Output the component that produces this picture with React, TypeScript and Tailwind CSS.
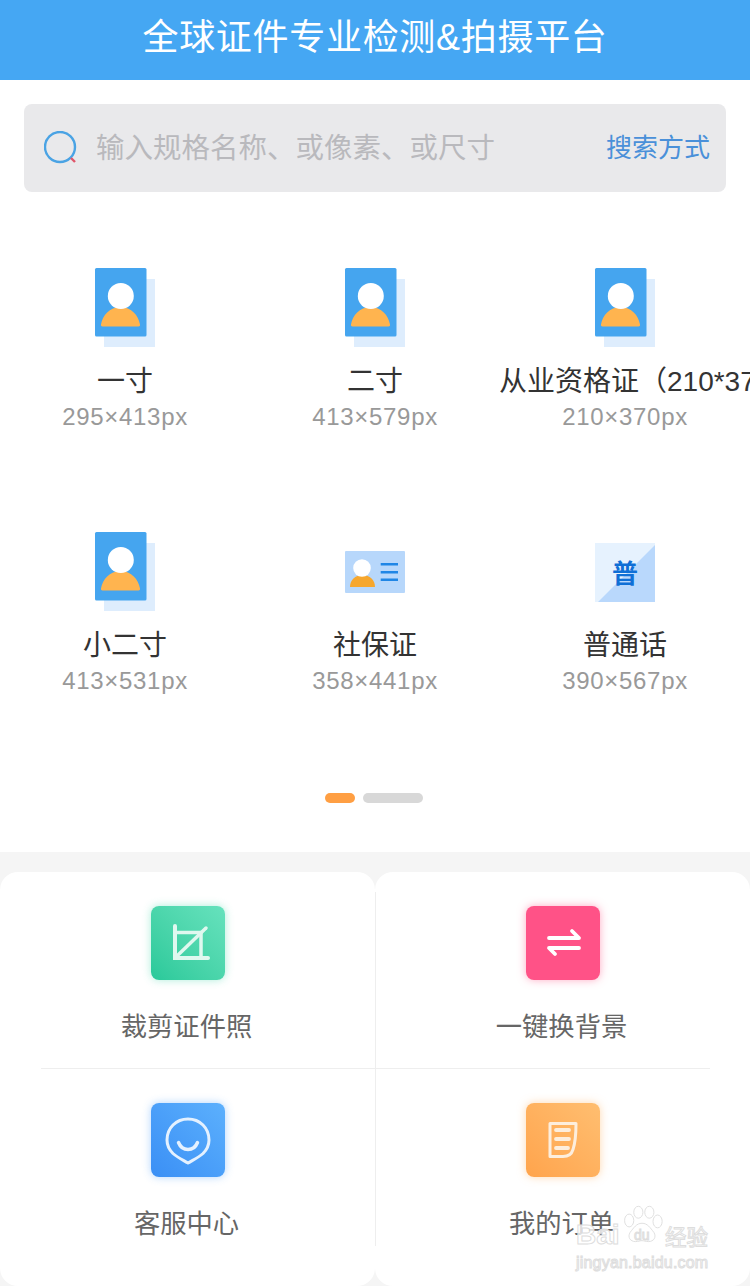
const FONT = "font-['Liberation_Sans','Noto_Sans_CJK_SC',sans-serif]";

function PersonIcon() {
  return (
    <svg width="80" height="80" viewBox="0 0 80 80">
      <rect x="19" y="11" width="51" height="68" fill="#deedfd" />
      <rect x="10" y="0" width="51.500" height="68.500" rx="1.500" fill="#45a5ef" />
      <path d="M17.500 58.500h36c1 0 1.800-.8 1.500-2-1.500-9-8.500-17.500-19.500-17.500S17.500 47.500 16 56.500c-.3 1.200.5 2 1.500 2z" fill="#ffb44f" />
      <circle cx="35.800" cy="28" r="13" fill="#fff" />
    </svg>
  );
}

function CardIcon() {
  return (
    <svg width="80" height="80" viewBox="0 0 80 80">
      <rect x="10" y="19" width="60" height="42" rx="1" fill="#b7d7fb" />
      <path d="M15 55c0-7 5-12 12.500-12S40 48 40 55z" fill="#f6a72e" />
      <circle cx="27" cy="36" r="8.800" fill="#fff" />
      <path d="M45.700 32.300h17.300M45.700 40.300h17.300M45.700 47.700h17.300" stroke="#1f86e6" strokeWidth="2.500" />
    </svg>
  );
}

function PuIcon() {
  return (
    <svg width="80" height="80" viewBox="0 0 80 80">
      <rect x="10" y="11" width="60" height="59" fill="#e6f2fe" />
      <path d="M70 13v57H13z" fill="#b9d8fc" />
      <text x="40" y="51" textAnchor="middle" fontSize="26" fontWeight="700" fill="#0f6fd6" fontFamily="'Noto Sans CJK SC',sans-serif">普</text>
    </svg>
  );
}

function Spec({ icon, name, size, clip }: { icon: React.ReactNode; name: string; size: string; clip?: boolean }) {
  return (
    <div className="flex h-[264px] w-[250px] flex-col items-center overflow-hidden">
      <div className="h-20 w-20">{icon}</div>
      <div className={`mt-[14px] h-[40px] text-[28px] leading-[40px] whitespace-nowrap text-[#333333] ${clip ? "w-[250px] -translate-x-px text-left" : ""}`}>{name}</div>
      <div className="-mt-[2px] text-[24px] leading-[34px] tracking-[0.7px] text-[#999999]">{size}</div>
    </div>
  );
}

function Tool({ label, bg, shadow, children }: { label: string; bg: string; shadow: string; children: React.ReactNode }) {
  return (
    <div className="flex flex-col items-center">
      <div className={`flex h-[74px] w-[74px] items-center justify-center rounded-[8px] ${bg} ${shadow}`}>{children}</div>
      <div className="mt-[29px] pr-[3px] text-[26.300px] leading-[36px] text-[#666666]">{label}</div>
    </div>
  );
}

export default function App() {
  return (
    <div className={`relative h-[1286px] w-[750px] overflow-hidden bg-[#f5f5f5] ${FONT}`}>
      <header className="flex h-20 items-center justify-center bg-[#45a7f3] pb-1 text-[36px] tracking-[0.7px] text-white">全球证件专业检测&amp;拍摄平台</header>

      <section className="h-[772px] bg-white">
        <div className="px-6 pt-6">
          <div className="flex h-[88px] items-center rounded-[8px] bg-[#e9e9eb] pl-[20px] pr-[16px]">
            <svg width="34" height="34" viewBox="0 0 34 34" className="shrink-0">
              <circle cx="16" cy="16" r="15" fill="none" stroke="#4aa3e4" strokeWidth="2.400" />
              <path d="M27 27l4 4" stroke="#e0566a" strokeWidth="2.400" />
            </svg>
            <div className="ml-[18px] flex-1 text-[28.500px] text-[#b9b9bd]">输入规格名称、或像素、或尺寸</div>
            <div className="text-[26px] text-[#4a90d9]">搜索方式</div>
          </div>
        </div>
        <div className="grid grid-cols-3 pt-[76px]">
          <Spec icon={<PersonIcon />} name="一寸" size="295×413px" />
          <Spec icon={<PersonIcon />} name="二寸" size="413×579px" />
          <Spec icon={<PersonIcon />} name="从业资格证（210*370）" size="210×370px" clip />
          <Spec icon={<PersonIcon />} name="小二寸" size="413×531px" />
          <Spec icon={<CardIcon />} name="社保证" size="358×441px" />
          <Spec icon={<PuIcon />} name="普通话" size="390×567px" />
        </div>
        <div className="-mt-[3px] flex justify-center gap-2 pr-[2px]">
          <div className="h-[10px] w-[30px] rounded-full bg-[#ff9f43]" />
          <div className="h-[10px] w-[60px] rounded-full bg-[#d8d8d8]" />
        </div>
      </section>

      <section className="mt-5 grid grid-cols-2">
        <div className="h-[414px] rounded-[18px] bg-white pl-px pt-5">
          <div className="h-[176px] pt-[14px]">
            <Tool label="裁剪证件照" bg="bg-gradient-to-tr from-[#28c99a] to-[#66e2bd]" shadow="shadow-[0_0_8px_rgba(70,215,170,0.45)]">
              <svg width="74" height="74" viewBox="0 0 74 74" fill="none" stroke="#dff8ef" strokeWidth="4" strokeLinecap="round">
                <path d="M24 20v32h33" />
                <path d="M24 26.500h26v25" strokeWidth="3.500" />
                <path d="M27 49L55 22" strokeWidth="3.500" />
              </svg>
            </Tool>
          </div>
          <div className="ml-10 h-px bg-[#eeeeee]" />
          <div className="h-[177px] pt-[34px]">
            <Tool label="客服中心" bg="bg-gradient-to-tr from-[#3a8ff5] to-[#5cb0fd]" shadow="shadow-[0_0_8px_rgba(80,160,250,0.45)]">
              <svg width="74" height="74" viewBox="0 0 74 74" fill="none" stroke="#e4f1ff" strokeWidth="3" strokeLinecap="round" strokeLinejoin="round">
                <path d="M37 16C25 16 16 25 16 37c0 6 2.500 10 6 13.500 4.500 4 10 6.500 15 9.500 5-3 10.500-5.500 15-9.500 3.500-3.500 6-7.500 6-13.500C58 25 49 16 37 16z" />
                <path d="M27.500 39.500c2 5 5.500 7 9.500 7s7.500-2 9.500-7" strokeWidth="3.500" />
              </svg>
            </Tool>
          </div>
        </div>
        <div className="h-[414px] rounded-[18px] bg-white pt-5">
          <div className="border-l border-[#eeeeee]">
            <div className="h-[176px] pt-[14px]">
              <Tool label="一键换背景" bg="bg-[#ff5287]" shadow="shadow-[0_0_8px_rgba(255,90,140,0.5)]">
                <svg width="74" height="74" viewBox="0 0 74 74" fill="none" stroke="#fff" strokeWidth="3.800" strokeLinecap="round" strokeLinejoin="round">
                  <path d="M23 32h30l-7-7" />
                  <path d="M53 42H23l6 6" />
                </svg>
              </Tool>
            </div>
            <div className="mr-10 h-px bg-[#eeeeee]" />
            <div className="h-[177px] pt-[34px]">
              <Tool label="我的订单" bg="bg-gradient-to-tr from-[#ffa44c] to-[#ffbe70]" shadow="shadow-[0_0_8px_rgba(255,180,100,0.5)]">
                <svg width="74" height="74" viewBox="0 0 74 74" fill="none" stroke="#fdeedd" strokeWidth="3" strokeLinecap="round" strokeLinejoin="round">
                  <path d="M24 20.500h26c0 10-1 20-3 26-1.500 5-5 7-10 7H24z" />
                  <path d="M30 27h13M30 36h13M30 45h12" strokeWidth="3.800" />
                </svg>
              </Tool>
            </div>
          </div>
        </div>
      </section>

      <div className="pointer-events-none absolute left-[576px] top-[1204px] h-[66px] w-[136px] font-['Liberation_Sans',sans-serif] text-[#ffffffcc] [-webkit-text-stroke:1px_#dddddd]">
        <span className="absolute left-0 top-[15px] text-[28px] font-bold leading-[32px]">Bai</span>
        <svg className="absolute left-[44px] top-0" width="44" height="44" viewBox="0 0 48 44" fill="#fff" stroke="#dddddd" strokeWidth="1">
          <ellipse cx="10" cy="16" rx="5" ry="7" />
          <ellipse cx="20" cy="7" rx="5" ry="6.500" />
          <ellipse cx="32" cy="7" rx="5" ry="6.500" />
          <ellipse cx="41" cy="17" rx="5" ry="7" />
          <path d="M24 19c6 0 9 5 13 10 3 5 0 10-6 10-3 0-5-1-7-1s-4 1-7 1c-6 0-9-5-6-10 4-5 7-10 13-10z" />
        </svg>
        <span className="absolute left-[58px] top-[24px] text-[14px] leading-[14px]">du</span>
        <span className="absolute left-[89px] top-[17px] font-['Noto_Sans_CJK_SC',sans-serif] text-[21.500px] leading-[30px]">经验</span>
        <span className="absolute left-0 top-[51px] text-[16px] leading-[16px] tracking-[0.2px] whitespace-nowrap">jingyan.baidu.com</span>
      </div>
    </div>
  );
}
